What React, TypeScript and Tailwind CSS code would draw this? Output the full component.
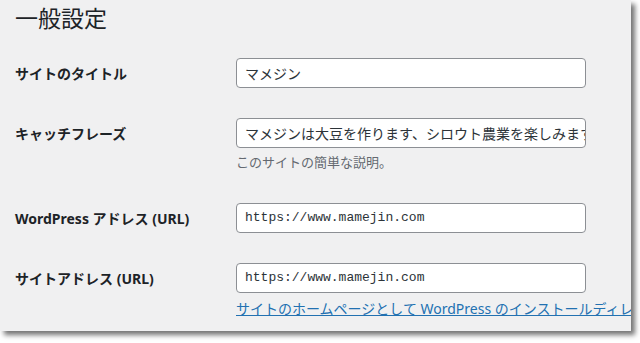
import React from "react";

const FONT = "font-['Noto_Sans','Noto_Sans_CJK_JP',sans-serif]";

function Row({
  label,
  children,
  pb = "pb-[15px]",
}: {
  label: string;
  children: React.ReactNode;
  pb?: string;
}) {
  return (
    <div className={`flex pt-[15px] ${pb}`}>
      <div className="w-[236px] pl-[15px] shrink-0 h-[30px] flex items-center text-[14px] font-bold text-[#1d2327] whitespace-nowrap">
        {label}
      </div>
      <div className="flex flex-col min-w-0 overflow-hidden">{children}</div>
    </div>
  );
}

function Input({ value, mono = false }: { value: string; mono?: boolean }) {
  return (
    <div
      className={`w-[350px] h-[30px] bg-white border border-[#8c8f94] rounded-[4px] px-[8px] flex items-center overflow-hidden whitespace-nowrap text-[#2c3338] ${
        mono
          ? "font-['Liberation_Mono',monospace] text-[13px]"
          : "text-[14px]"
      }`}
    >
      {value}
    </div>
  );
}

export default function App() {
  return (
    <div className={`w-[640px] h-[343px] bg-white ${FONT}`}>
      <div className="w-[631px] h-[331px] bg-[#f0f0f1] shadow-[4px_4px_5px_rgba(0,0,0,0.55)] overflow-hidden">
        <div className="pt-[3px] pl-[15px] h-[33px] leading-[30px] text-[23px] text-[#1d2327] whitespace-nowrap">
          一般設定
        </div>
        <div className="mt-[10px]">
          <Row label="サイトのタイトル">
            <Input value="マメジン" />
          </Row>
          <Row label="キャッチフレーズ" pb="pb-[16px]">
            <Input value="マメジンは大豆を作ります、シロウト農業を楽しみます" />
            <div className="mt-[5px] text-[13px] leading-[19px] text-[#646970] whitespace-nowrap">
              このサイトの簡単な説明。
            </div>
          </Row>
          <Row label="WordPress アドレス (URL)">
            <Input value="https://www.mamejin.com" mono />
          </Row>
          <Row label="サイトアドレス (URL)">
            <Input value="https://www.mamejin.com" mono />
            <div className="mt-[6px] text-[14px] leading-[20px] text-[#2271b1] underline whitespace-nowrap">
              サイトのホームページとして WordPress のインストールディレクトリと異なる場所を設定する場合は、ここにアドレスを入力してください。
            </div>
          </Row>
        </div>
      </div>
    </div>
  );
}
